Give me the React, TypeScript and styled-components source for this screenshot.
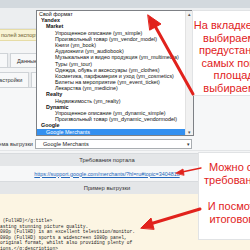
import React from "react";
import styled, { createGlobalStyle } from "styled-components";

interface OptionItem {
  label: string;
  level: number;
  group?: boolean;
  selected?: boolean;
}

const options: OptionItem[] = [
  { label: "Свой формат", level: 0 },
  { label: "Yandex", level: 1, group: true },
  { label: "Market", level: 2, group: true },
  { label: "Упрощенное описание (ym_simple)", level: 3 },
  { label: "Произвольный товар (ym_vendor_model)", level: 3 },
  { label: "Книги (ym_book)", level: 3 },
  { label: "Аудиокниги (ym_audiobook)", level: 3 },
  { label: "Музыкальная и видео продукция (ym_multimedia)", level: 3 },
  { label: "Туры (ym_tour)", level: 3 },
  { label: "Одежда, обувь и аксессуары (ym_clothes)", level: 3 },
  { label: "Косметика, парфюмерия и уход (ym_cosmetics)", level: 3 },
  { label: "Билеты на мероприятие (ym_event_ticket)", level: 3 },
  { label: "Лекарства (ym_medicine)", level: 3 },
  { label: "Realty", level: 2, group: true },
  { label: "Недвижимость (ym_realty)", level: 3 },
  { label: "Dynamic", level: 2, group: true },
  { label: "Упрощенное описание (ym_dynamic_simple)", level: 3 },
  { label: "Произвольный товар (ym_dynamic_vendormodel)", level: 3 },
  { label: "Google", level: 1, group: true },
  { label: "Google Merchants", level: 2, selected: true },
];

const codeLines = [
  " (FullHD)</g:title>",
  "asting stunning picture quality.",
  "080p (FullHD) is an excellent television/monitor.",
  "080p (FullHD) sports a widescreen 1080p panel,",
  "original format, whilst also providing plenty of",
  "ions.</g:description>",
];

const indents = [2, 4, 9, 18];

const App = () => {
  return (
    <Page>
      <GlobalStyle />
      <TopBar />
      <HeaderStrip />
      <Notice>полей экспорта</Notice>
      <TabStrip>
        <Tab>&nbsp;</Tab>
        <Tab>Данные для выгрузки</Tab>
      </TabStrip>
      <TabStrip $second>
        <Tab>Настройки</Tab>
        <Tab>Валюты</Tab>
      </TabStrip>
      <FormArea />
      <FormRow>
        <FieldLabel>Схема выгрузки</FieldLabel>
        <Select>
          Google Merchants
          <SelectArrow>▾</SelectArrow>
        </Select>
      </FormRow>
      <Sections>
        <Band>Требования портала</Band>
        <LinkRow>
          <a href="#">https://support.google.com/merchants/?hl=ru#topic=3404818</a>
        </LinkRow>
        <Band>Пример выгрузки</Band>
        <Code>
          {codeLines.map((line) => (
            <CodeLine key={line}>{line}</CodeLine>
          ))}
        </Code>
      </Sections>

      <Dropdown>
        <OptionList>
          {options.map((o) => (
            <Option key={o.label} $indent={indents[o.level]} $group={o.group} $selected={o.selected}>
              {o.label}
            </Option>
          ))}
        </OptionList>
        <Scrollbar>
          <span>▴</span>
          <span>▾</span>
        </Scrollbar>
      </Dropdown>

      <Note $top={10} $height={86} $left={192} $width={116}>
        На вкладке «Формат»
        <br />
        выбираем один из
        <br />
        предустановленных
        <br />
        самых популярных
        <br />
        площадок или
        <br />
        выбираем «Свой»
      </Note>
      <Note $top={152} $height={88} $left={198} $width={130}>
        Можно ознакомиться
        <br />
        требованиями портала
        <NoteGap />
        И посмотреть пример
        <br />
        итогового результата
      </Note>

      <Arrows width="250" height="250" viewBox="0 0 250 250">
        <g fill="#e1221c" stroke="#e1221c" strokeLinecap="round">
          <line x1="193" y1="94" x2="155" y2="26" strokeWidth="3" />
          <polygon points="148,15 161,24 150,30" strokeWidth="1" />
          <line x1="201" y1="168" x2="182" y2="172" strokeWidth="1.4" />
          <polygon points="176,173 183,169 184,175" strokeWidth="0.8" />
          <line x1="200" y1="209" x2="150" y2="224" strokeWidth="3" />
          <polygon points="141,228 151,218 154,229" strokeWidth="1" />
        </g>
      </Arrows>
    </Page>
  );
};

const GlobalStyle = createGlobalStyle`
  html, body {
    margin: 0;
    padding: 0;
  }
  body {
    width: 250px;
    height: 250px;
    overflow: hidden;
    background: #f3f4f5;
    font-family: "Liberation Sans", Arial, sans-serif;
  }
`;

const Page = styled.div`
  position: relative;
  width: 250px;
  height: 250px;
  overflow: hidden;
  display: flex;
  flex-direction: column;
  background: #f4f5f6;
`;

const TopBar = styled.div`
  height: 8px;
  flex: none;
  background: #d3d9de;
`;

const HeaderStrip = styled.div`
  height: 20px;
  flex: none;
  background: #eceef0;
  border-bottom: 1px solid #dfe2e5;
`;

const Notice = styled.div`
  height: 10px;
  flex: none;
  display: flex;
  align-items: center;
  padding-left: 1px;
  background: #f8f3d4;
  border-top: 1px solid #e6dca6;
  border-bottom: 1px solid #e6dca6;
  font-size: 5.6px;
  color: #6e6233;
  white-space: nowrap;
`;

const TabStrip = styled.div<{ $second?: boolean }>`
  height: ${(p) => (p.$second ? 15 : 14)}px;
  flex: none;
  margin-top: ${(p) => (p.$second ? 4 : 12)}px;
  display: flex;
  gap: 2px;
  margin-left: ${(p) => (p.$second ? -12 : -26)}px;
  background: #e9ebed;
  border-bottom: 1px solid #cfd3d7;
`;

const Tab = styled.div`
  display: flex;
  align-items: center;
  padding: 0 6px;
  min-width: 20px;
  background: #f7f8f9;
  border: 1px solid #cfd3d7;
  border-bottom: none;
  font-size: 5.6px;
  color: #333;
  white-space: nowrap;
`;

const FormArea = styled.div`
  height: 50px;
  flex: none;
  background: #f6f7f8;
`;

const FormRow = styled.div`
  height: 12px;
  flex: none;
  display: flex;
  align-items: center;
  gap: 2px;
  background: #f6f7f8;
  border-bottom: 1px solid #e3e5e7;
`;

const FieldLabel = styled.div`
  width: 33px;
  flex: none;
  display: flex;
  justify-content: flex-end;
  font-size: 5.6px;
  color: #333;
  white-space: nowrap;
`;

const Select = styled.div`
  position: relative;
  width: 148px;
  height: 8px;
  display: flex;
  align-items: center;
  padding-left: 7px;
  background: #fff;
  border: 1px solid #a9adb1;
  font-size: 5.6px;
  color: #222;
`;

const SelectArrow = styled.span`
  position: absolute;
  right: 1px;
  top: 0;
  font-size: 5px;
  line-height: 8px;
  color: #333;
`;

const Sections = styled.div`
  flex: 1;
  display: flex;
  flex-direction: column;
  width: 214px;
  margin-top: 2px;
`;

const Band = styled.div`
  height: 13px;
  flex: none;
  display: flex;
  align-items: center;
  justify-content: center;
  background: #e4e6e8;
  border-top: 1px solid #d8dbde;
  font-size: 5.8px;
  color: #333;
  box-sizing: border-box;
`;

const LinkRow = styled.div`
  height: 15px;
  flex: none;
  display: flex;
  align-items: center;
  justify-content: center;
  background: #f6f7f8;
  font-size: 5.4px;

  a {
    color: #2266bb;
    text-decoration: underline;
  }
`;

const Code = styled.div`
  flex: 1;
  padding-top: 24px;
  width: 250px;
  background: #fcf5e3;
  font-family: "Liberation Mono", "Courier New", monospace;
  font-size: 4.6px;
  line-height: 5.6px;
  color: #222;
`;

const CodeLine = styled.div`
  white-space: pre;
`;

const Dropdown = styled.div`
  position: absolute;
  left: 36px;
  top: 10px;
  width: 156px;
  height: 124px;
  display: flex;
  background: #fff;
  border: 1px solid #7d8085;
`;

const OptionList = styled.div`
  flex: 1;
  display: flex;
  flex-direction: column;
  overflow: hidden;
`;

const Option = styled.div<{ $indent: number; $group?: boolean; $selected?: boolean }>`
  height: 6.2px;
  line-height: 6.2px;
  padding-left: ${(p) => p.$indent}px;
  font-size: 5.4px;
  font-weight: ${(p) => (p.$group ? 700 : 400)};
  white-space: nowrap;
  color: ${(p) => (p.$selected ? "#fff" : "#111")};
  background: ${(p) => (p.$selected ? "#3390f0" : "transparent")};
`;

const Scrollbar = styled.div`
  width: 7px;
  flex: none;
  display: flex;
  flex-direction: column;
  justify-content: space-between;
  align-items: center;
  background: #f1f1f1;
  border-left: 1px solid #e2e2e2;
  font-size: 5px;
  color: #555;
`;

const Note = styled.div<{ $top: number; $height: number; $left: number; $width: number }>`
  position: absolute;
  top: ${(p) => p.$top}px;
  left: ${(p) => p.$left}px;
  width: ${(p) => p.$width}px;
  height: ${(p) => p.$height}px;
  box-sizing: border-box;
  padding-top: 8px;
  background: #fff;
  border: 1px solid #e1e3e5;
  text-align: center;
  font-family: "Liberation Sans", Arial, sans-serif;
  font-size: 11px;
  line-height: 12.5px;
  color: #e1221c;
  white-space: nowrap;
`;

const NoteGap = styled.div`
  height: 14px;
`;

const Arrows = styled.svg`
  position: absolute;
  left: 0;
  top: 0;
  pointer-events: none;
`;

export default App;
